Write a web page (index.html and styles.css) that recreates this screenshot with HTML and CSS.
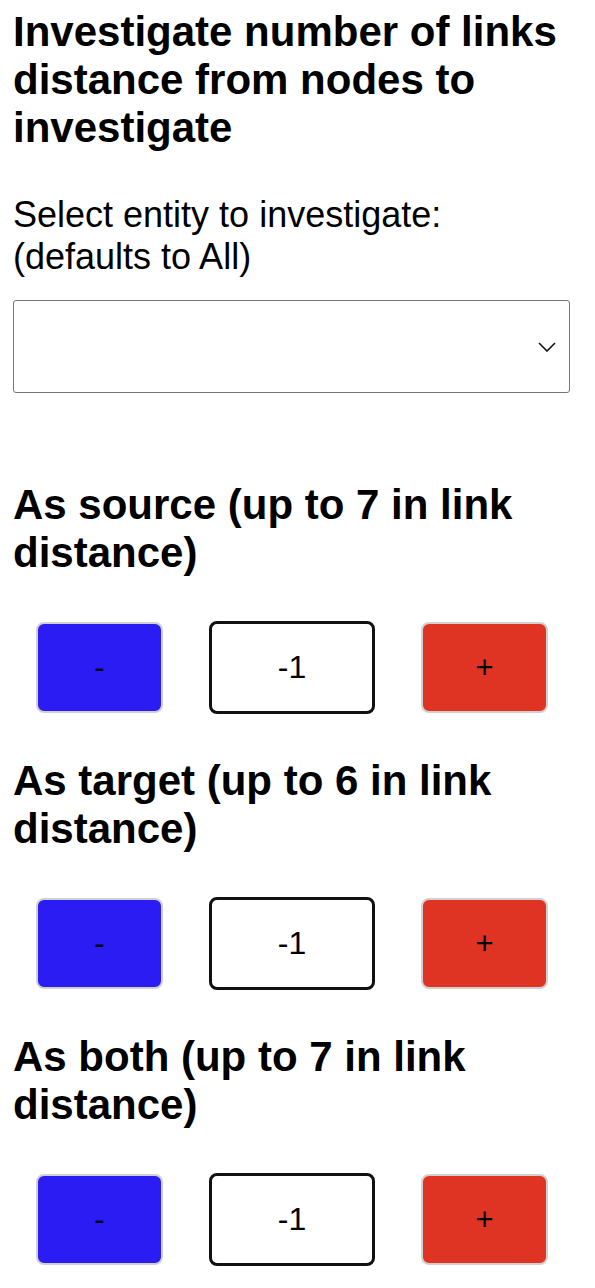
FILE: index.html
```html
<!DOCTYPE html>
<html lang="en">
<head>
    <meta charset="UTF-8">
    <title>Investigate</title>
    <link rel="stylesheet" href="styles.css">
</head>
<body>
    <div class="container">
        <h1>Investigate number of links distance from nodes to investigate</h1>
        <label for="entity">Select entity to investigate:<br>(defaults to All)</label>
        <select id="entity" name="entity"></select>

        <h2>As source (up to 7 in link distance)</h2>
        <div class="counter">
            <button class="minus">-</button>
            <input type="text" class="value" value="-1">
            <button class="plus">+</button>
        </div>

        <h2>As target (up to 6 in link distance)</h2>
        <div class="counter">
            <button class="minus">-</button>
            <input type="text" class="value" value="-1">
            <button class="plus">+</button>
        </div>

        <h2>As both (up to 7 in link distance)</h2>
        <div class="counter">
            <button class="minus">-</button>
            <input type="text" class="value" value="-1">
            <button class="plus">+</button>
        </div>
    </div>
</body>
</html>
```

FILE: styles.css
```css
body {
    font-family: "Liberation Sans", Arial, sans-serif;
    margin: 0;
    padding: 8px 0 0 13px;
    background: #fff;
    color: #000;
}
.container {
    width: 558px;
    display: flex;
    flex-direction: column;
}
h1 {
    font-size: 42px;
    line-height: 48px;
    margin: 0;
}
label {
    font-size: 36px;
    line-height: 42px;
    margin-top: 42px;
}
select {
    margin-top: 22px;
    height: 93px;
    width: 557px;
    border: 1px solid #767676;
    border-radius: 3px;
    -webkit-appearance: none;
    appearance: none;
    background: #fff url("data:image/svg+xml,%3Csvg xmlns='http://www.w3.org/2000/svg' width='18' height='10' viewBox='0 0 18 10'%3E%3Cpath d='M1 1l8 8 8-8' fill='none' stroke='%23111' stroke-width='1.6'/%3E%3C/svg%3E") no-repeat right 13px center;
}
h2 {
    font-size: 42px;
    line-height: 48px;
    margin: 88px 0 0;
}
h2 ~ h2 {
    margin-top: 43px;
}
.counter {
    display: flex;
    justify-content: space-around;
    align-items: center;
    margin-top: 44px;
}
.counter button {
    width: 127px;
    height: 91px;
    border: 2px solid #d0d0d0;
    border-radius: 8px;
    font-family: "Liberation Sans", Arial, sans-serif;
    font-size: 31px;
    color: #000;
    cursor: pointer;
}
.minus {
    background: #2c1cf4;
}
.plus {
    background: #df3424;
}
.value {
    width: 166px;
    height: 93px;
    box-sizing: border-box;
    border: 3px solid #111;
    border-radius: 8px;
    text-align: center;
    font-family: "Liberation Sans", Arial, sans-serif;
    font-size: 32px;
    color: #000;
}
```
